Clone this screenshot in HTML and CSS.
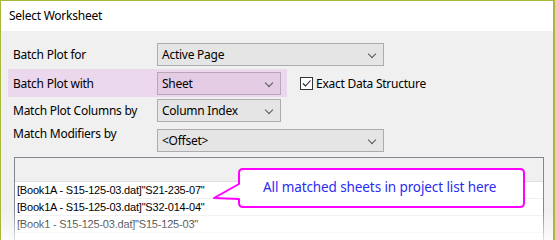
FILE: index.html
```html
<!DOCTYPE html>
<html lang="en">
<head>
    <meta charset="UTF-8">
    <title>Select Worksheet</title>
    <link rel="stylesheet" href="styles.css">
</head>
<body>
    <div class="window">
        <div class="titlebar">Select Worksheet</div>
        <div class="content">
            <div class="row row-first">
                <span class="label">Batch Plot for</span>
                <div class="combo wide">Active Page<span class="chev"></span></div>
            </div>
            <div class="row-wrap">
                <div class="row highlight">
                    <span class="label">Batch Plot with</span>
                    <div class="combo narrow">Sheet<span class="chev"></span></div>
                </div>
                <label class="check"><span class="box"><svg width="11" height="11" viewBox="0 0 11 11"><path d="M2 5.5 L4.5 8 L9.5 2.5" fill="none" stroke="#222" stroke-width="1.1"/></svg></span>Exact Data Structure</label>
            </div>
            <div class="row">
                <span class="label">Match Plot Columns by</span>
                <div class="combo narrow">Column Index<span class="chev"></span></div>
            </div>
            <div class="row row-last">
                <span class="label top">Match Modifiers by</span>
                <div class="combo wide">&lt;Offset&gt;<span class="chev"></span></div>
            </div>

            <div class="list">
                <div class="list-head"></div>
                <div class="item">[Book1A - S15-125-03.dat]"S21-235-07"</div>
                <div class="item">[Book1A - S15-125-03.dat]"S32-014-04"</div>
                <div class="item">[Book1 - S15-125-03.dat]"S15-125-03"</div>
            </div>
        </div>

        <!-- callout note drawn over the list -->
        <svg class="callout" width="330" height="52" viewBox="0 0 330 52">
            <path d="M37 8 L314 8 Q318 8 318 12 L318 42 Q318 46 314 46 L37 46 Q33 46 33 42 L33 38 L8 37 L33 23 L33 12 Q33 8 37 8 Z" fill="#fff" stroke="#ff00ff" stroke-width="2" stroke-linejoin="round"/>
            <text x="57" y="31" class="callout-text">All matched sheets in project list here</text>
        </svg>
        <div class="fade"></div>
    </div>
</body>
</html>
```

FILE: styles.css
```css
body {
    margin: 0;
    font-family: "Noto Sans", "Open Sans", sans-serif;
    font-size: 12px;
    letter-spacing: -0.25px;
    color: #000;
    background: #fff;
}

.window {
    position: relative;
    width: 555px;
    height: 240px;
    box-sizing: border-box;
    border: 1px solid #aab839;
    border-bottom: none;
    border-right-width: 2px;
    overflow: hidden;
    background: #f0f0f0;
}

.titlebar {
    height: 30px;
    line-height: 30px;
    padding-left: 8px;
    background: #fff;
}

.content {
    padding: 11px 0 0 7px;
}

.row {
    display: flex;
    align-items: center;
    height: 24px;
    padding-left: 5px;
}

.row-wrap {
    display: flex;
    align-items: center;
    margin-top: 3px;
}

.row.highlight {
    height: 28px;
    width: 274px;
    background: #ecd8ec;
}

.row-wrap + .row {
    margin-top: 1px;
}

.row-last {
    height: 26px;
    margin-top: 4px;
    align-items: flex-end;
}

.label {
    width: 144px;
    flex: none;
}

.label.top {
    align-self: flex-start;
    margin-top: -1px;
}

.combo {
    position: relative;
    height: 23px;
    line-height: 21px;
    box-sizing: border-box;
    border: 1px solid #adadad;
    background: #e5e5e5;
    padding-left: 4px;
}

.highlight .combo {
    background: #e4cce4;
    border-color: #b9a6b9;
}

.combo.wide {
    width: 227px;
}

.combo.narrow {
    width: 124px;
}

.chev {
    position: absolute;
    right: 8px;
    top: 7px;
    width: 5px;
    height: 5px;
    border-right: 1px solid #555;
    border-bottom: 1px solid #555;
    transform: rotate(45deg);
}

.check {
    display: flex;
    align-items: center;
    margin-left: 13px;
}

.box {
    width: 13px;
    height: 13px;
    box-sizing: border-box;
    border: 1px solid #333;
    background: #fff;
    margin-right: 3px;
    display: flex;
}

.box svg {
    display: block;
}

.list {
    margin-top: 5px;
    margin-left: 6px;
    width: 528px;
    height: 90px;
    border: 1px solid #828790;
    border-bottom: none;
    background: #fff;
    font-family: "Liberation Sans", Arial, sans-serif;
    font-size: 11px;
    letter-spacing: -0.2px;
}

.list-head {
    height: 23px;
    background: #f0f0f0;
    border-bottom: 1px solid #e0e0e0;
}

.item {
    height: 16px;
    line-height: 16px;
    padding-left: 2px;
    border-bottom: 1px solid #f0f0f0;
}

.callout {
    position: absolute;
    left: 205px;
    top: 160px;
}

.callout-text {
    font-family: "Noto Sans", "Open Sans", sans-serif;
    font-size: 13.5px;
    letter-spacing: -0.1px;
    fill: #2b2bf0;
}

.fade {
    position: absolute;
    left: 0;
    right: 0;
    bottom: 0;
    height: 30px;
    background: linear-gradient(rgba(255, 255, 255, 0), rgba(255, 255, 255, 0.75));
    pointer-events: none;
}
```
